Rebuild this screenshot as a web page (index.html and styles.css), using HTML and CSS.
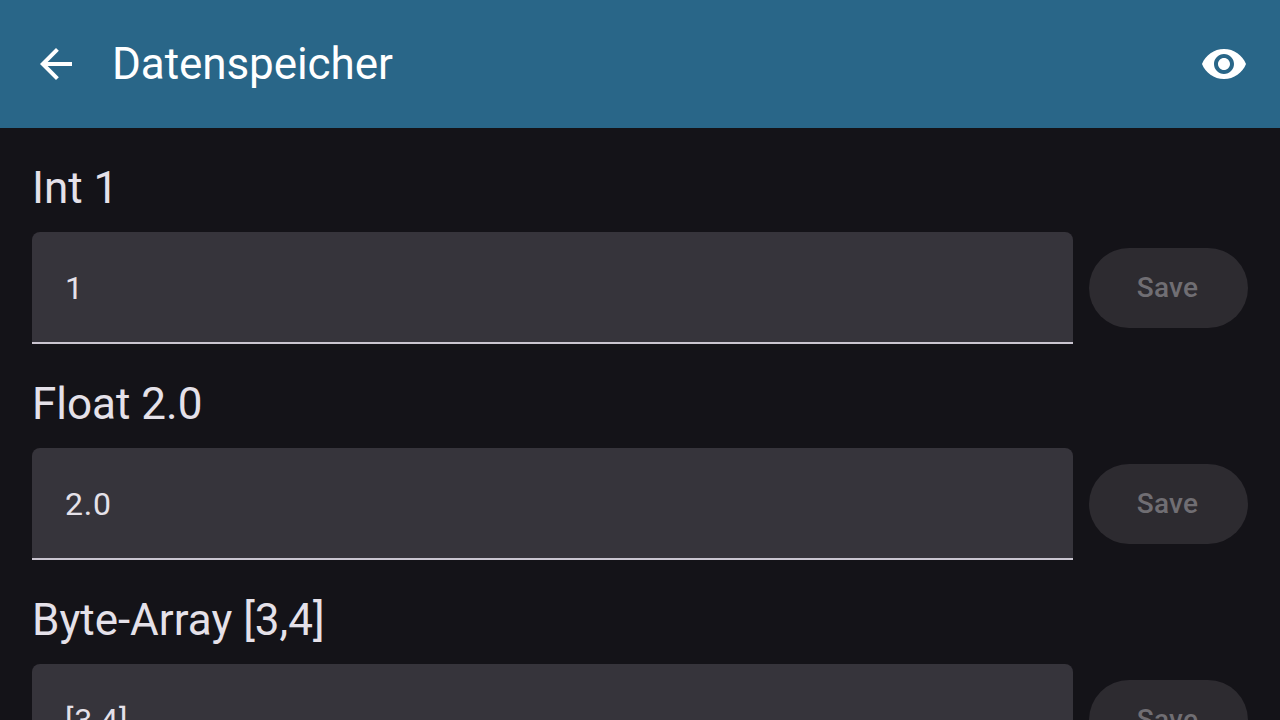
FILE: index.html
```html
<!DOCTYPE html>
<html lang="de">
<head>
<meta charset="utf-8">
<title>Datenspeicher</title>
<link rel="stylesheet" href="styles.css">
</head>
<body>
<header class="app-bar">
  <svg class="icon back" viewBox="0 0 24 24"><path d="M20 11H7.83l5.59-5.59L12 4l-8 8 8 8 1.41-1.41L7.83 13H20v-2z"/></svg>
  <h1 class="title">Datenspeicher</h1>
  <svg class="icon eye" viewBox="0 0 24 24"><path d="M12 4.5C7 4.5 2.73 7.61 1 12c1.73 4.39 6 7.5 11 7.5s9.27-3.11 11-7.5c-1.73-4.39-6-7.5-11-7.5zM12 17c-2.76 0-5-2.24-5-5s2.24-5 5-5 5 2.24 5 5-2.24 5-5 5zm0-8c-1.66 0-3 1.34-3 3s1.34 3 3 3 3-1.34 3-3-1.34-3-3-3z"/></svg>
</header>
<main class="content">
  <section class="entry">
    <h2 class="label">Int 1</h2>
    <div class="row"><div class="field">1</div><button class="save" disabled>Save</button></div>
  </section>
  <section class="entry">
    <h2 class="label">Float 2.0</h2>
    <div class="row"><div class="field">2.0</div><button class="save" disabled>Save</button></div>
  </section>
  <section class="entry">
    <h2 class="label">Byte-Array [3,4]</h2>
    <div class="row"><div class="field">[3,4]</div><button class="save" disabled>Save</button></div>
  </section>
</main>
</body>
</html>
```
FILE: styles.css
```css
* { box-sizing: border-box; }
body {
  margin: 0;
  height: 720px;
  overflow: hidden;
  background: #141318;
  color: #e5e1e9;
  font-family: Roboto, sans-serif;
}
.app-bar {
  height: 128px;
  display: flex;
  align-items: center;
  padding: 0 32px;
  background: #296688;
  color: #fff;
}
.icon { width: 48px; height: 48px; fill: currentColor; }
.title {
  flex: 1;
  margin: 0 0 0 32px;
  font-size: 44px;
  line-height: 56px;
  font-weight: 400;
  letter-spacing: -0.08px;
}
.content {
  height: 592px;
  padding: 32px 32px 0;
  overflow: hidden;
}
.entry { height: 216px; }
.label {
  margin: 0 0 16px;
  font-size: 44px;
  line-height: 56px;
  font-weight: 400;
}
.row { display: flex; align-items: center; gap: 16px; }
.field {
  flex: 1;
  height: 112px;
  padding: 0 33px;
  border-bottom: 2px solid #cac5d0;
  border-radius: 8px 8px 0 0;
  background: #36343b;
  font-size: 32px;
  line-height: 112px;
  letter-spacing: 0.8px;
}
.save {
  width: 159px;
  height: 80px;
  padding: 0 2px 0 0;
  border: 0;
  border-radius: 40px;
  background: #2d2b30;
  color: #706e73;
  font: 500 28px/40px Roboto, sans-serif;
  letter-spacing: 0.2px;
}
```
